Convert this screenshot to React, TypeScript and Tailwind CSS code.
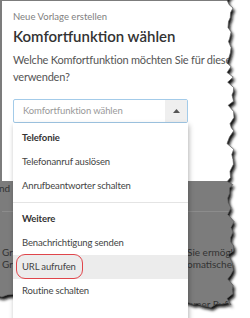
import React from 'react'

const FONT = "font-['Lato','Open_Sans',sans-serif]"

function tornPath() {
  let s = 11
  const rnd = () => {
    s = (s * 16807) % 2147483647
    return s / 2147483647
  }
  const pts: [number, number][] = [[-6, -6], [232, -6]]
  // right edge, top to bottom
  let y = 0
  while (y < 300) {
    const x = 230.5 + (rnd() - 0.5) * 7
    pts.push([x, y])
    y += 3 + rnd() * 4
  }
  pts.push([231, 305])
  // bottom edge, right to left
  const base = (x: number) => (x > 195 ? 305 : x > 180 ? 300 + ((x - 180) / 15) * 5 : x > 60 ? 300.5 : 295 + (x / 60) * 5.5)
  let x = 228
  while (x > 0) {
    pts.push([x, base(x) + (rnd() - 0.5) * 5])
    x -= 3 + rnd() * 4
  }
  pts.push([-6, 295], [-6, -6])
  return 'M' + pts.map(([a, b]) => `${a.toFixed(1)},${b.toFixed(1)}`).join(' L') + ' Z'
}

function TornEdge() {
  const d = tornPath()
  return (
    <svg className="pointer-events-none absolute inset-0" width={250} height={318}>
      <defs>
        <filter id="tear-blur" x="-20%" y="-20%" width="140%" height="140%">
          <feGaussianBlur stdDeviation="1.5" />
        </filter>
        <mask id="tear-outside">
          <rect width={250} height={318} fill="white" />
          <path d={d} fill="black" />
        </mask>
      </defs>
      <g mask="url(#tear-outside)">
        <rect width={250} height={318} fill="white" />
        <path d={d} transform="translate(2,3)" fill="#111" filter="url(#tear-blur)" />
      </g>
      <path d={d} fill="none" stroke="#5e5e5e" strokeWidth={0.7} />
    </svg>
  )
}

const groups = [
  { title: 'Telefonie', items: ['Telefonanruf auslösen', 'Anrufbeantworter schalten'] },
  { title: 'Weitere', items: ['Benachrichtigung senden', 'URL aufrufen', 'Routine schalten'] },
]

export default function App() {
  return (
    <div className={`relative h-[318px] w-[250px] overflow-hidden bg-white ${FONT}`}>
      <div className="h-full w-[300px] bg-[#7c7c7c] pl-[2px] pt-[1px]">
        <div className="h-[180px] bg-white pl-[11px] pt-[10px]">
          <p className="text-[9.5px] leading-[12px] text-[#808080]">Neue Vorlage erstellen</p>
          <h1 className="mt-[4px] text-[15px] font-semibold leading-[18px] text-[#333]">Komfortfunktion wählen</h1>
          <p className="mt-[7px] whitespace-nowrap text-[11px] leading-[16.5px] tracking-[-0.2px] text-[#555]">
            Welche Komfortfunktion möchten Sie für diese Vorlage
            <br />
            verwenden?
          </p>

          <div className="relative mt-[14px] w-[175px]">
            <div className="flex h-[24px] items-stretch rounded-[2px] border border-[#a3cbe9] bg-white">
              <span className="flex flex-1 items-center pl-[9px] text-[9.5px] tracking-[-0.1px] text-[#999]">Komfortfunktion wählen</span>
              <span className="flex w-[22px] items-center justify-center bg-[#efefef]">
                <svg width="7" height="4" viewBox="0 0 7 4"><path d="M0 4 L3.5 0 L7 4 Z" fill="#555" /></svg>
              </span>
            </div>

            <div className="absolute left-0 top-[24px] z-10 h-[200px] w-[175px] bg-white pt-[3px] shadow-[1px_2px_5px_rgba(0,0,0,0.3)]">
              {groups.map((g, gi) => (
                <div key={g.title} className={gi > 0 ? 'mt-[4px] border-t border-[#e4e4e4] pt-[4px]' : ''}>
                  <div className="flex h-[24px] items-center pl-[9px] text-[9.5px] font-bold tracking-[-0.1px] text-[#333]">{g.title}</div>
                  {g.items.map((it) => (
                    <div
                      key={it}
                      className={`relative flex h-[24px] items-center pl-[9px] text-[9.5px] tracking-[-0.15px] text-[#444] ${it === 'URL aufrufen' ? 'bg-[#ececec]' : ''}`}
                    >
                      {it}
                      {it === 'URL aufrufen' && (
                        <span className="absolute left-[3px] top-[-1px] h-[25px] w-[67px] rounded-[9px] border-[1.5px] border-[#e0454b]" />
                      )}
                    </div>
                  ))}
                </div>
              ))}
            </div>
          </div>
        </div>

        <div className="text-[10px] text-[#333]">
          <p className="-ml-[3px] leading-[14px]">nd</p>
          <div className="mt-[16px] h-px w-full bg-[#8c8c8c]" />
          <div className="mt-[34px] leading-[12px]">
            <div className="flex whitespace-nowrap">
              <span className="w-[185px]">Gr</span>
              <span>Sie ermöglichen</span>
            </div>
            <div className="flex whitespace-nowrap">
              <span className="w-[185px]">Gru</span>
              <span>omatischen</span>
            </div>
          </div>
          <div className="mt-[28px] flex whitespace-nowrap leading-[12px]">
            <span className="w-[183px]" />
            <span>mmer Ruf</span>
          </div>
        </div>
      </div>
      <TornEdge />
    </div>
  )
}
